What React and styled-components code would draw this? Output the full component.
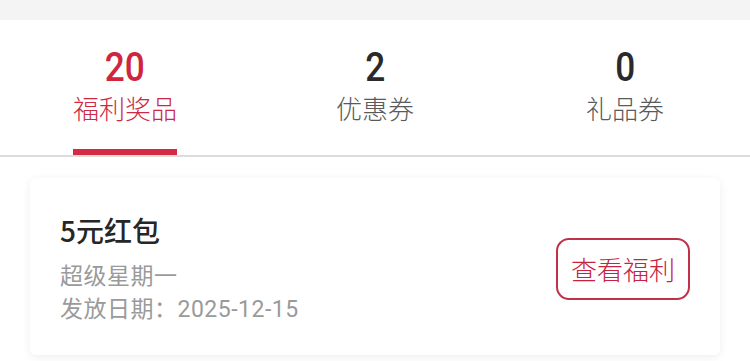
import styled, { createGlobalStyle } from "styled-components";

const GlobalStyle = createGlobalStyle`
  html, body {
    margin: 0;
    padding: 0;
    background: #ffffff;
    font-family: Roboto, "Noto Sans CJK SC", sans-serif;
  }
`;

const tabs = [
  { count: 20, label: "福利奖品", active: true },
  { count: 2, label: "优惠券" },
  { count: 0, label: "礼品券" },
];

const App = () => {
  return (
    <>
      <GlobalStyle />
      <Page>
        <TopBar />
        <TabBar>
          {tabs.map((t) => (
            <Tab key={t.label}>
              <Count $active={t.active}>{t.count}</Count>
              <Label $active={t.active}>{t.label}</Label>
              <Indicator $active={t.active} />
            </Tab>
          ))}
        </TabBar>
        <List>
          <Card>
            <Info>
              <Title>5元红包</Title>
              <Sub>超级星期一</Sub>
              <Sub>发放日期：2025-12-15</Sub>
            </Info>
            <ViewButton>查看福利</ViewButton>
          </Card>
        </List>
      </Page>
    </>
  );
};

export default App;

const Page = styled.div`
  width: 750px;
  height: 361px;
  overflow: hidden;
  background: #ffffff;
`;

const TopBar = styled.div`
  height: 20px;
  background: #f4f4f4;
`;

const TabBar = styled.div`
  display: grid;
  grid-template-columns: repeat(3, 1fr);
  height: 135px;
  border-bottom: 2px solid #dcdcdc;
`;

const Tab = styled.div`
  display: flex;
  flex-direction: column;
  align-items: center;
`;

const Count = styled.div`
  margin-top: 28px;
  height: 40px;
  line-height: 40px;
  font-family: Roboto, sans-serif;
  font-size: 40px;
  font-weight: 500;
  color: ${({ $active }) => ($active ? "#d0253f" : "#2a2a2a")};
  transform: scaleX(0.88);
`;

const Label = styled.div`
  margin-top: 1px;
  height: 38px;
  line-height: 38px;
  font-family: "Noto Sans CJK SC", sans-serif;
  font-size: 26px;
  font-weight: 300;
  color: ${({ $active }) => ($active ? "#cc2a44" : "#5a5a5a")};
`;

const Indicator = styled.div`
  margin-top: auto;
  width: 104px;
  height: 6px;
  background: ${({ $active }) => ($active ? "#d42a45" : "transparent")};
`;

const List = styled.div`
  padding: 21px 30px 0;
`;

const Card = styled.div`
  display: flex;
  align-items: center;
  justify-content: space-between;
  height: 177px;
  box-sizing: border-box;
  padding: 0 30px;
  background: #ffffff;
  border-radius: 6px;
  box-shadow: 0 2px 10px rgba(0, 0, 0, 0.07);
`;

const Info = styled.div`
  display: flex;
  flex-direction: column;
`;

const Title = styled.div`
  font-family: "Noto Sans CJK SC", sans-serif;
  font-size: 28px;
  font-weight: 500;
  line-height: 36px;
  color: #262626;
  margin-bottom: 12px;
  margin-top: 4px;
`;

const Sub = styled.div`
  font-family: Roboto, "Noto Sans CJK SC", sans-serif;
  font-size: 23px;
  line-height: 33px;
  letter-spacing: 0.5px;
  color: #9a9a9a;
`;

const ViewButton = styled.button`
  width: 134px;
  height: 62px;
  box-sizing: border-box;
  border: 2px solid #bf3049;
  border-radius: 13px;
  background: #ffffff;
  color: #c8223f;
  font-family: "Noto Sans CJK SC", sans-serif;
  font-size: 26px;
  font-weight: 300;
  padding: 0;
  margin-top: 4px;
`;
